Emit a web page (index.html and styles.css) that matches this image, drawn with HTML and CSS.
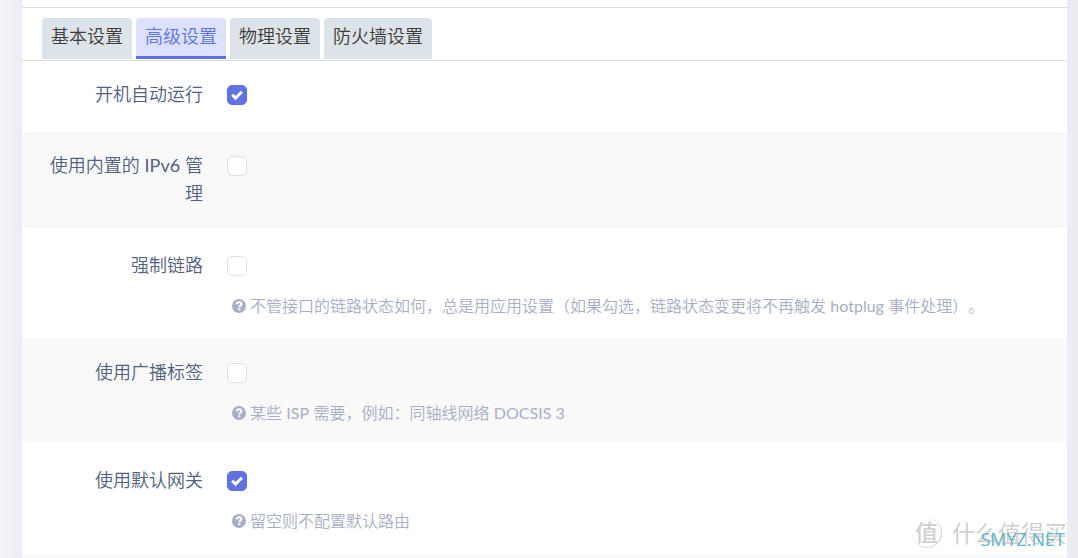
FILE: index.html
```
<!DOCTYPE html>
<html lang="zh-CN">
  <head>
    <meta charset="utf-8" />
    <meta name="viewport" content="width=device-width, initial-scale=1" />
    <title>接口设置</title>
    <link rel="stylesheet" href="styles.css">
  </head>
  <body>
    <svg class="sprite" aria-hidden="true">
      <symbol id="icon-help" viewBox="0 0 14 14">
        <circle cx="7" cy="7" r="7" fill="#a9aec4" />
        <path d="M4.5 5.3C4.8 3.8 5.9 3.2 7.1 3.2c1.3 0 2.4.8 2.4 1.9 0 1.5-2.2 1.5-2.2 3.1" fill="none" stroke="#fff" stroke-width="2" />
        <rect x="6.2" y="9.2" width="2.1" height="2" fill="#fff" />
      </symbol>
    </svg>

    <main class="panel">
      <nav class="tabs">
        <button type="button" class="tab">基本设置</button>
        <button type="button" class="tab active">高级设置</button>
        <button type="button" class="tab">物理设置</button>
        <button type="button" class="tab">防火墙设置</button>
      </nav>

      <form class="settings">
        <div class="row">
          <label class="title" for="auto">开机自动运行</label>
          <div class="field">
            <input type="checkbox" id="auto" checked />
          </div>
        </div>
        <div class="row">
          <label class="title" for="delegate">使用内置的 <span class="latin">IPv6</span> 管理</label>
          <div class="field">
            <input type="checkbox" id="delegate" />
          </div>
        </div>
        <div class="row">
          <label class="title" for="force-link">强制链路</label>
          <div class="field">
            <input type="checkbox" id="force-link" />
            <p class="hint"><svg class="help"><use href="#icon-help" /></svg>不管接口的链路状态如何，总是用应用设置（如果勾选，链路状态变更将不再触发 <span class="latin">hotplug</span> 事件处理）。</p>
          </div>
        </div>
        <div class="row">
          <label class="title" for="broadcast">使用广播标签</label>
          <div class="field">
            <input type="checkbox" id="broadcast" />
            <p class="hint"><svg class="help"><use href="#icon-help" /></svg>某些 <span class="latin">ISP</span> 需要，例如：同轴线网络 <span class="latin">DOCSIS 3</span></p>
          </div>
        </div>
        <div class="row">
          <label class="title" for="gateway">使用默认网关</label>
          <div class="field">
            <input type="checkbox" id="gateway" checked />
            <p class="hint"><svg class="help"><use href="#icon-help" /></svg>留空则不配置默认路由</p>
          </div>
        </div>
        <div class="rest"></div>
      </form>

      <div class="watermark">
        <span class="seal">值</span>
        <span class="brand">什么值得买</span>
        <span class="site">SMYZ.NET</span>
      </div>
    </main>
  </body>
</html>
```
FILE: styles.css
```
* {
  box-sizing: border-box;
}

body {
  margin: 0;
  padding: 0 11px 0 22px;
  background: linear-gradient(to right, #f4f4f6, #ebedf2 22px);
  font-family: Lato, 'Noto Sans CJK SC', sans-serif;
  font-weight: 350;
  text-spacing-trim: space-all;
  color: #525f7f;
}

button,
input {
  font: inherit;
  margin: 0;
}

.latin {
  font-weight: 400;
}

.sprite {
  display: none;
}

.panel {
  position: relative;
  display: flex;
  flex-direction: column;
  min-height: 100vh;
  padding-top: 7px;
  background: #fff;
}

.tabs {
  display: flex;
  flex-wrap: wrap;
  gap: 4px;
  padding: 10px 20px 1px;
  border-top: 1px solid #dcdcdc;
  border-bottom: 1px solid #dcdcdc;
}

.tab {
  height: 41px;
  padding: 0 9px 6px;
  border: 0;
  border-radius: 4px 4px 0 0;
  background: #dce3e9;
  color: #3c3c3c;
  font-size: 18px;
  line-height: 28px;
}

.tab.active {
  padding-bottom: 3px;
  border-bottom: 3px solid #5e72e4;
  background: #dce1fe;
  color: #5e72e4;
}

.settings {
  display: flex;
  flex-direction: column;
  flex-grow: 1;
}

.row {
  display: flex;
  gap: 24px;
  padding: 23px 20px;
}

.row:first-child {
  padding-top: 19px;
}

.row:nth-child(even) {
  padding-top: 19px;
  padding-bottom: 20px;
  background: #f9f9f9;
}

.rest {
  flex-grow: 1;
  min-height: 4px;
  background: #f9f9f9;
}

.title {
  flex: none;
  width: 161px;
  padding-bottom: 1px;
  font-size: 18px;
  line-height: 28px;
  text-align: right;
}

.field {
  flex-grow: 1;
  padding-top: 5px;
}

input[type='checkbox'] {
  appearance: none;
  display: block;
  width: 20px;
  height: 20px;
  border: 1px solid #dfe0e4;
  border-radius: 5px;
  background: #fff;
}

input[type='checkbox']:checked {
  border-color: #5e72e4;
  background: #5e72e4 url("data:image/svg+xml,%3Csvg xmlns='http://www.w3.org/2000/svg' viewBox='0 0 12 12'%3E%3Cpath d='M1.2 5.8l3.3 3.3 6.4-6.4' fill='none' stroke='white' stroke-width='3'/%3E%3C/svg%3E") center / 12px no-repeat;
}

.hint {
  margin: 20px 0 0 5px;
  color: #a9aec4;
  font-size: 16px;
  line-height: 20px;
}

.help {
  width: 14px;
  height: 14px;
  margin-right: 4px;
  vertical-align: -1px;
}

/* stamp over the bottom right corner */
.watermark {
  position: absolute;
  right: 0;
  bottom: 10px;
  display: flex;
  align-items: center;
  gap: 10px;
  color: #d0d0d0;
  font-weight: 400;
  white-space: nowrap;
  pointer-events: none;
}

.seal {
  width: 30px;
  height: 30px;
  border-right: 1px solid #d0d0d0;
  border-bottom: 1px solid #d0d0d0;
  border-radius: 50%;
  font-size: 23px;
  font-weight: 500;
  line-height: 28px;
  text-align: center;
}

.brand {
  font-size: 23px;
  line-height: 30px;
}

.site {
  position: absolute;
  right: 2px;
  bottom: -2px;
  color: #62b3c6;
  font-family: 'Open Sans', sans-serif;
  font-size: 18px;
  line-height: 22px;
}
```
